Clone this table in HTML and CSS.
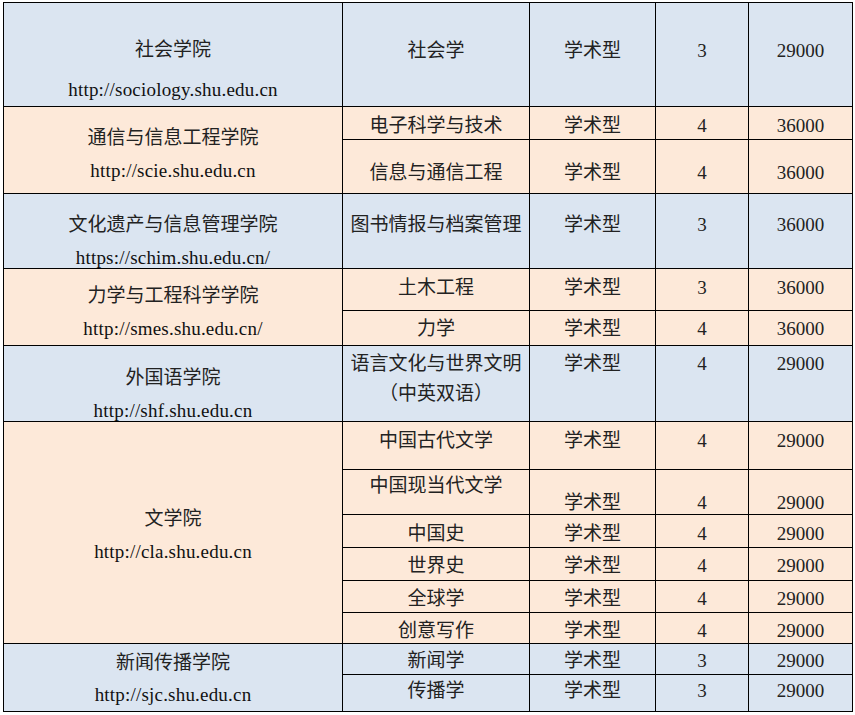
FILE: index.html
```html
<!DOCTYPE html>
<html lang="zh-CN">
<head>
<meta charset="utf-8">
<title>上海大学 学院专业学费表</title>
<link rel="stylesheet" href="styles.css">
</head>
<body>
<div class="fee-table">
  <!-- 社会学院 -->
  <div class="cell blue college pt33 gap-lg"><span>社会学院</span><span class="url">http://sociology.shu.edu.cn</span></div>
  <div class="cell blue pt35">社会学</div>
  <div class="cell blue pt35">学术型</div>
  <div class="cell blue pt35">3</div>
  <div class="cell blue pt35">29000</div>

  <!-- 通信与信息工程学院 -->
  <div class="cell peach college span2 pt18"><span>通信与信息工程学院</span><span class="url">http://scie.shu.edu.cn</span></div>
  <div class="cell peach pt6">电子科学与技术</div>
  <div class="cell peach pt6">学术型</div>
  <div class="cell peach pt6">4</div>
  <div class="cell peach pt6">36000</div>
  <div class="cell peach pt20">信息与通信工程</div>
  <div class="cell peach pt20">学术型</div>
  <div class="cell peach pt20">4</div>
  <div class="cell peach pt20">36000</div>

  <!-- 文化遗产与信息管理学院 -->
  <div class="cell blue college pt18 gap-md"><span>文化遗产与信息管理学院</span><span class="url">https://schim.shu.edu.cn/</span></div>
  <div class="cell blue pt18">图书情报与档案管理</div>
  <div class="cell blue pt18">学术型</div>
  <div class="cell blue pt18">3</div>
  <div class="cell blue pt18">36000</div>

  <!-- 力学与工程科学学院 -->
  <div class="cell peach college span2 pt14"><span>力学与工程科学学院</span><span class="url">http://smes.shu.edu.cn/</span></div>
  <div class="cell peach pt6">土木工程</div>
  <div class="cell peach pt6">学术型</div>
  <div class="cell peach pt6">3</div>
  <div class="cell peach pt6">36000</div>
  <div class="cell peach">力学</div>
  <div class="cell peach">学术型</div>
  <div class="cell peach">4</div>
  <div class="cell peach">36000</div>

  <!-- 外国语学院 -->
  <div class="cell blue college pt19"><span>外国语学院</span><span class="url">http://shf.shu.edu.cn</span></div>
  <div class="cell blue college gap-sm"><span>语言文化与世界文明</span><span>（中英双语）</span></div>
  <div class="cell blue">学术型</div>
  <div class="cell blue">4</div>
  <div class="cell blue">29000</div>

  <!-- 文学院 -->
  <div class="cell peach college span6 pt84"><span>文学院</span><span class="url">http://cla.shu.edu.cn</span></div>
  <div class="cell peach pt6">中国古代文学</div>
  <div class="cell peach pt6">学术型</div>
  <div class="cell peach pt6">4</div>
  <div class="cell peach pt6">29000</div>
  <div class="cell peach pt3">中国现当代文学</div>
  <div class="cell peach pt20">学术型</div>
  <div class="cell peach pt20">4</div>
  <div class="cell peach pt20">29000</div>
  <div class="cell peach pt6">中国史</div>
  <div class="cell peach pt6">学术型</div>
  <div class="cell peach pt6">4</div>
  <div class="cell peach pt6">29000</div>
  <div class="cell peach">世界史</div>
  <div class="cell peach">学术型</div>
  <div class="cell peach">4</div>
  <div class="cell peach">29000</div>
  <div class="cell peach">全球学</div>
  <div class="cell peach">学术型</div>
  <div class="cell peach">4</div>
  <div class="cell peach">29000</div>
  <div class="cell peach">创意写作</div>
  <div class="cell peach">学术型</div>
  <div class="cell peach">4</div>
  <div class="cell peach">29000</div>

  <!-- 新闻传播学院 -->
  <div class="cell blue college span2 pt6 gap-10"><span>新闻传播学院</span><span class="url">http://sjc.shu.edu.cn</span></div>
  <div class="cell blue pt4">新闻学</div>
  <div class="cell blue pt4">学术型</div>
  <div class="cell blue pt4">3</div>
  <div class="cell blue pt4">29000</div>
  <div class="cell blue pt3">传播学</div>
  <div class="cell blue pt3">学术型</div>
  <div class="cell blue pt3">3</div>
  <div class="cell blue pt3">29000</div>
</div>
</body>
</html>
```

FILE: styles.css
```css
html, body {
  margin: 0;
  padding: 0;
  background: #ffffff;
}

body {
  padding: 2px 0 0 3px;
  font-family: "Liberation Serif", "Noto Sans CJK SC", serif;
  font-size: 19px;
  line-height: 22px;
  color: #222222;
}

.fee-table {
  display: grid;
  grid-template-columns: 338px 186px 125px 92px 103px;
  grid-template-rows: 103px 32px 53px 74px 41px 34px 75px 47px 44px 32px 32px 31px 30px 30px 36px;
  gap: 1px;
  padding: 1px;
  width: max-content;
  background: #000000;
}

.cell {
  box-sizing: border-box;
  padding-top: 7px;
  text-align: center;
  white-space: nowrap;
}

.blue { background: #dbe5f1; }
.peach { background: #fde9d9; }

.college {
  display: flex;
  flex-direction: column;
  align-items: center;
  gap: 11px;
}

.url {
  letter-spacing: 0.2px;
  color: #111111;
}

.gap-lg { gap: 18px; }
.gap-md { gap: 11px; }
.gap-10 { gap: 10px; }
.gap-sm { gap: 8px; }

.span2 { grid-row: span 2; }
.span6 { grid-row: span 6; }

.pt3 { padding-top: 5px; }
.pt4 { padding-top: 6px; }
.pt6 { padding-top: 8px; }
.pt14 { padding-top: 16px; }
.pt18 { padding-top: 20px; }
.pt19 { padding-top: 21px; }
.pt20 { padding-top: 22px; }
.pt33 { padding-top: 36px; }
.pt35 { padding-top: 37px; }
.pt84 { padding-top: 86px; }
```
